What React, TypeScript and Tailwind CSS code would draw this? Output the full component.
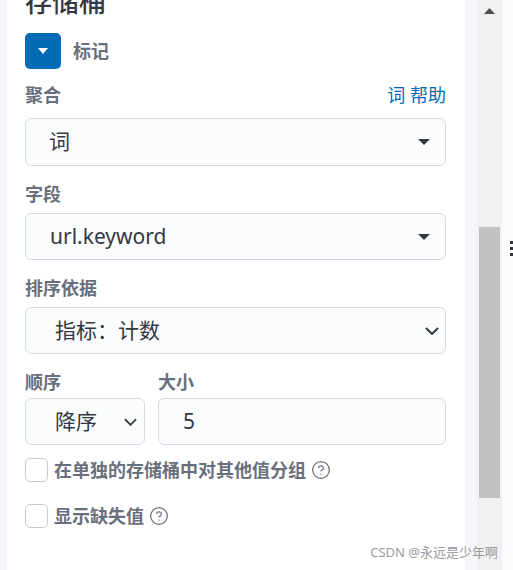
import { CircleHelp } from "lucide-react";

const font = "font-['Noto_Sans','Noto_Sans_CJK_SC',sans-serif]";

function Caret() {
  return (
    <svg width="12" height="6" viewBox="0 0 12 6" className="shrink-0">
      <path d="M0 0 L12 0 L6 6 Z" fill="#343741" />
    </svg>
  );
}

function Chevron({ w = 14 }: { w?: number }) {
  return (
    <svg width={w} height="8" viewBox="0 0 14 8" className="shrink-0">
      <path d="M1 1 L7 7 L13 1" fill="none" stroke="#343741" strokeWidth="2" />
    </svg>
  );
}

function Label({ children }: { children: React.ReactNode }) {
  return <div className="h-[26px] text-[18px] leading-[26px] font-bold text-[#69707d]">{children}</div>;
}

function Check({ label }: { label: string }) {
  return (
    <div className="flex items-center h-[24px]">
      <div className="w-[23px] h-[24px] rounded-[5px] border border-[#c6ccd6] bg-white shrink-0" />
      <span className="ml-[6px] text-[18px] leading-[24px] font-bold text-[#69707d]">{label}</span>
      <CircleHelp size={20} strokeWidth={1.5} className="ml-[5px] text-[#69707d]" />
    </div>
  );
}

export default function App() {
  return (
    <div className={`relative flex w-[513px] h-[570px] overflow-hidden bg-[#f5f7fa] ${font}`}>
      <div className="w-[7px] shrink-0" />
      <div className="w-[458px] shrink-0 bg-white pl-[18px] pr-[19px]">
        <div className="mt-[-11px] h-[26px] text-[27px] leading-[26px] font-medium text-[#343741]">存储桶</div>

        <div className="mt-[18px] flex items-center">
          <div className="w-[36px] h-[36px] rounded-[5px] bg-[#006bb4] flex items-center justify-center">
            <svg width="10" height="6" viewBox="0 0 10 6">
              <path d="M0 0 L10 0 L5 6 Z" fill="#fff" />
            </svg>
          </div>
          <span className="ml-[12px] text-[18px] font-semibold text-[#69707d]">标记</span>
        </div>

        <div className="mt-[13px] flex items-center justify-between">
          <Label>聚合</Label>
          <span className="text-[18px] leading-[26px] text-[#006bb4]">词 帮助</span>
        </div>
        <div className="mt-[10px] h-[48px] rounded-[6px] border border-[#d3dae6] bg-[#fbfcfd] flex items-center pl-[23px] pr-[15px]">
          <span className="flex-1 text-[21px] text-[#343741]">词</span>
          <Caret />
        </div>

        <div className="mt-[15px]">
          <Label>字段</Label>
        </div>
        <div className="mt-[6px] h-[47px] rounded-[6px] border border-[#d3dae6] bg-[#fbfcfd] flex items-center pl-[24px] pr-[15px]">
          <span className="flex-1 text-[21px] text-[#343741]">url.keyword</span>
          <Caret />
        </div>

        <div className="mt-[15px]">
          <Label>排序依据</Label>
        </div>
        <div className="mt-[6px] h-[47px] rounded-[6px] border border-[#d3dae6] bg-[#fbfcfd] flex items-center pl-[29px] pr-[6px]">
          <span className="flex-1 text-[21px] text-[#343741]">指标：计数</span>
          <Chevron />
        </div>

        <div className="mt-[15px] flex gap-[13px]">
          <div className="w-[120px]">
            <Label>顺序</Label>
            <div className="mt-[3px] h-[47px] rounded-[6px] border border-[#d3dae6] bg-[#fbfcfd] flex items-center pl-[29px] pr-[7px]">
              <span className="flex-1 text-[21px] text-[#343741]">降序</span>
              <Chevron w={13} />
            </div>
          </div>
          <div className="flex-1">
            <Label>大小</Label>
            <div className="mt-[3px] h-[47px] rounded-[6px] border border-[#d3dae6] bg-[#fbfcfd] flex items-center pl-[24px]">
              <span className="text-[21px] text-[#343741]">5</span>
            </div>
          </div>
        </div>

        <div className="mt-[13px]">
          <Check label="在单独的存储桶中对其他值分组" />
        </div>
        <div className="mt-[22px]">
          <Check label="显示缺失值" />
        </div>
      </div>

      <div className="w-[12px] shrink-0 bg-[#f5f6fa]" />
      <div className="w-[25px] shrink-0 bg-[#f0f0f0] flex flex-col items-center">
        <svg width="11" height="6" viewBox="0 0 11 6" className="mt-[8px]">
          <path d="M0 6 L5.5 0 L11 6 Z" fill="#505050" />
        </svg>
        <div className="mt-[213px] w-[21px] h-[271px] bg-[#c1c1c1]" />
      </div>
      <div className="flex-1 bg-[#fafbfc] pl-[8px] pt-[241px] flex flex-col gap-[3px]">
        <div className="w-[3px] h-[3px] bg-[#343741]" />
        <div className="w-[3px] h-[3px] bg-[#343741]" />
        <div className="w-[3px] h-[3px] bg-[#343741]" />
      </div>

      <div className="absolute right-[15px] bottom-[8px] text-[13px] text-[#9a9a9a]">CSDN @永远是少年啊</div>
    </div>
  );
}
